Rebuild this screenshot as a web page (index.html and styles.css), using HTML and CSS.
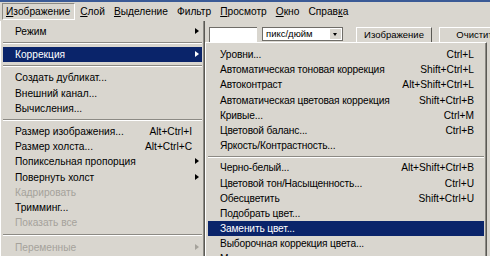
FILE: index.html
```html
<!DOCTYPE html>
<html lang="ru">
<head>
    <meta charset="UTF-8">
    <title>Изображение — Коррекция</title>
    <link rel="stylesheet" href="styles.css">
</head>
<body>
    <div class="menubar">
        <span class="top-item pressed"><u>И</u>зображение</span>
        <span class="top-item"><u>С</u>лой</span>
        <span class="top-item"><u>В</u>ыделение</span>
        <span class="top-item">Фильтр</span>
        <span class="top-item"><u>П</u>росмотр</span>
        <span class="top-item"><u>О</u>кно</span>
        <span class="top-item">Справ<u>к</u>а</span>
    </div>

    <div class="workspace">
        <!-- меню Изображение -->
        <div class="menu main-menu">
            <div class="item sub">Режим</div>
            <div class="sep"></div>
            <div class="item sub active">Коррекция</div>
            <div class="sep"></div>
            <div class="item">Создать дубликат...</div>
            <div class="item">Внешний канал...</div>
            <div class="item">Вычисления...</div>
            <div class="sep"></div>
            <div class="item">Размер изображения...<span class="key">Alt+Ctrl+I</span></div>
            <div class="item">Размер холста...<span class="key">Alt+Ctrl+C</span></div>
            <div class="item sub">Попиксельная пропорция</div>
            <div class="item sub">Повернуть холст</div>
            <div class="item off">Кадрировать</div>
            <div class="item">Тримминг...</div>
            <div class="item off">Показать все</div>
            <div class="sep last"></div>
            <div class="item sub off">Переменные</div>
            <div class="item off">Применить набор данных...</div>
        </div>

        <div class="right-side">
            <!-- панель параметров -->
            <div class="options">
                <span class="field"></span>
                <span class="dropdown">пикс/дюйм<span class="drop-btn"></span></span>
                <span class="btn">Изображение</span>
                <span class="btn wide">Очистить</span>
            </div>

            <!-- подменю Коррекция -->
            <div class="menu submenu">
                <div class="item">Уровни...<span class="key">Ctrl+L</span></div>
                <div class="item">Автоматическая тоновая коррекция<span class="key">Shift+Ctrl+L</span></div>
                <div class="item">Автоконтраст<span class="key">Alt+Shift+Ctrl+L</span></div>
                <div class="item">Автоматическая цветовая коррекция<span class="key">Shift+Ctrl+B</span></div>
                <div class="item">Кривые...<span class="key">Ctrl+M</span></div>
                <div class="item">Цветовой баланс...<span class="key">Ctrl+B</span></div>
                <div class="item">Яркость/Контрастность...</div>
                <div class="sep"></div>
                <div class="item">Черно-белый...<span class="key">Alt+Shift+Ctrl+B</span></div>
                <div class="item">Цветовой тон/Насыщенность...<span class="key">Ctrl+U</span></div>
                <div class="item">Обесцветить<span class="key">Shift+Ctrl+U</span></div>
                <div class="item">Подобрать цвет...</div>
                <div class="item active">Заменить цвет...</div>
                <div class="item">Выборочная коррекция цвета...</div>
                <div class="item">Микширование каналов...</div>
            </div>
        </div>
    </div>
</body>
</html>
```

FILE: styles.css
```css
body {
    margin: 0;
    width: 490px;
    height: 256px;
    overflow: hidden;
    font-family: "Liberation Sans", Arial, sans-serif;
    font-size: 10.2px;
    color: #000;
    background-color: #d9d6cf;
}

.menubar {
    display: flex;
    height: 19px;
    border-top: 2px solid #3a5a96;
    padding-left: 1px;
    align-items: center;
}
.top-item {
    padding: 0 4px;
    margin-right: 1px;
    height: 17px;
    line-height: 17px;
    box-sizing: border-box;
}
.pressed {
    border-top: 1px solid #8c8a84;
    border-left: 1px solid #8c8a84;
    border-right: 1px solid #fff;
    border-bottom: 1px solid #fff;
    line-height: 15px;
    padding: 0 4px 0 3px;
    margin-left: 1px;
}

.workspace {
    display: flex;
    align-items: flex-start;
}

.menu {
    background-color: #d9d6cf;
    box-sizing: border-box;
    padding: 3px 2px;
}
.main-menu {
    flex-shrink: 0;
    width: 205px;
    height: 240px;
    border-left: 1px solid #fff;
    border-right: 1px solid #5a5954;
    box-shadow: inset -1px 0 0 #8c8a84;
}
.item {
    position: relative;
    display: flex;
    justify-content: space-between;
    height: 15.2px;
    line-height: 15px;
    padding: 0 10px 0 12px;
    white-space: nowrap;
}
.item.active {
    background-color: #0a246a;
    color: #fff;
}
.item.off {
    color: #a5a29b;
}
.sub::after {
    content: "";
    position: absolute;
    right: 3px;
    top: 4px;
    border-left: 4px solid #000;
    border-top: 3.5px solid transparent;
    border-bottom: 3.5px solid transparent;
}
.sub.active::after {
    border-left-color: #fff;
}
.sub.off::after {
    border-left-color: #a5a29b;
}
.sep {
    height: 0;
    margin: 3px 0 3px;
    border-top: 1px solid #8c8a84;
    border-bottom: 1px solid #fff;
}
.sep.last {
    margin: 4px 0 4px;
}

.right-side {
    flex: 1;
    min-width: 0;
    display: flex;
    flex-direction: column;
}
.options {
    display: flex;
    height: 21px;
    padding: 6px 0 0 4px;
    box-sizing: border-box;
    overflow: hidden;
    align-items: flex-start;
}
.field {
    flex-shrink: 0;
    width: 47px;
    height: 14px;
    background-color: #fff;
    border-top: 1px solid #6f6d68;
    border-left: 1px solid #6f6d68;
}
.dropdown {
    flex-shrink: 0;
    position: relative;
    margin-left: 5px;
    width: 76px;
    height: 12px;
    line-height: 12px;
    padding-left: 3px;
    font-size: 9.5px;
    background-color: #fff;
    border: 1px solid #6f6d68;
}
.drop-btn {
    position: absolute;
    right: 1px;
    top: 1px;
    width: 11px;
    height: 10px;
    background-color: #d9d6cf;
}
.drop-btn::after {
    content: "";
    position: absolute;
    left: 3px;
    top: 4px;
    border-top: 3px solid #000;
    border-left: 2.5px solid transparent;
    border-right: 2.5px solid transparent;
}
.btn {
    flex-shrink: 0;
    margin-left: 13px;
    width: 74px;
    height: 14px;
    line-height: 13px;
    text-align: center;
    font-size: 9.5px;
    border-top: 1px solid #fff;
    border-left: 1px solid #fff;
    border-right: 1px solid #5a5954;
    border-bottom: 1px solid #5a5954;
}
.btn.wide {
    margin-left: 7px;
}

.submenu {
    width: 282px;
    height: 216px;
    border-top: 1px solid #fff;
    border-left: 1px solid #fff;
    border-right: 1px solid #5a5954;
    box-shadow: inset -1px 0 0 #8c8a84;
    padding-top: 4px;
}
.submenu .item {
    letter-spacing: -0.15px;
}
.submenu .key {
    letter-spacing: 0;
}
.submenu .sep {
    margin: 3px 0 2px;
}
```
